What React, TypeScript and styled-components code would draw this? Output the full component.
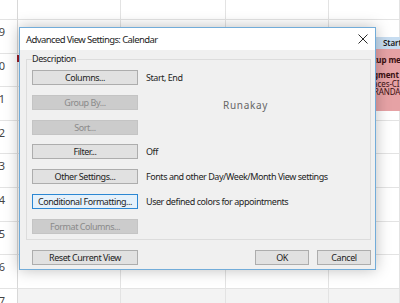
import React from "react";
import styled, { createGlobalStyle } from "styled-components";

const GlobalStyle = createGlobalStyle`
  html, body {
    margin: 0;
    padding: 0;
    overflow: hidden;
    background: #ffffff;
    font-family: "Noto Sans", "Open Sans", sans-serif;
  }
`;

const Page = styled.div`
  position: relative;
  width: 400px;
  height: 303px;
  overflow: hidden;
  background: #ffffff;
`;

const Grid = styled.div`
  display: grid;
  grid-template-columns: 18px 103px 105px 103px 1fr;
  grid-template-rows: 20px repeat(8, 33.6px) 1fr;
  width: 100%;
  height: 100%;
`;

const HourCell = styled.div`
  display: flex;
  justify-content: flex-end;
  padding: 4px 12px 0 0;
  border-bottom: 1px solid #e3e3e3;
  border-right: 1px solid #d8d8d8;
  box-sizing: border-box;
  font-size: 11px;
  color: #444;
  white-space: nowrap;
`;

const DayCell = styled.div<{ $off: boolean }>`
  border-bottom: 1px solid #e3e3e3;
  border-right: 1px solid #e3e3e3;
  box-sizing: border-box;
  background: ${(p) => (p.$off ? "#f3f3f3" : "#ffffff")};
`;

const Marker = styled.div`
  position: absolute;
  left: 17px;
  top: 55px;
  width: 3px;
  height: 7px;
  background: #9c1a24;
`;

const Appointment = styled.div`
  position: absolute;
  left: 338px;
  top: 37px;
  width: 70px;
  display: flex;
  flex-direction: column;
  font-size: 8px;
  line-height: 8.5px;
  letter-spacing: -0.1px;
  white-space: nowrap;
`;

const AllDay = styled.div`
  height: 12px;
  padding: 2px 0 0 45px;
  box-sizing: border-box;
  background: #c7ddf1;
  color: #1a1a1a;
  font-weight: 600;
  overflow: hidden;
`;

const ApptBody = styled.div`
  height: 62px;
  padding: 7px 0 0 25px;
  box-sizing: border-box;
  background: #e6a2a5;
  border-left: 1px solid #c0686c;
  color: #3b1011;
  overflow: hidden;
`;

const ApptLine = styled.div<{ $bold?: boolean; $gap?: number }>`
  font-weight: ${(p) => (p.$bold ? 700 : 400)};
  margin-bottom: ${(p) => p.$gap ?? 0}px;
`;

const Dialog = styled.div`
  position: absolute;
  left: 19px;
  top: 27px;
  width: 357px;
  height: 243px;
  box-sizing: border-box;
  display: flex;
  flex-direction: column;
  background: #f0f0f0;
  border: 1px solid #72acd9;
  box-shadow: 0 0 14px rgba(0, 0, 0, 0.26);
`;

const TitleBar = styled.div`
  height: 22px;
  flex: 0 0 auto;
  display: flex;
  align-items: center;
  justify-content: space-between;
  padding: 0 6px 0 6px;
  background: #ffffff;
  font-size: 9.5px;
  letter-spacing: -0.6px;
  color: #1e1e1e;
`;

const Close = styled.svg`
  width: 10px;
  height: 10px;
  margin-right: 1px;
`;

const Body = styled.div`
  flex: 1 1 auto;
  display: flex;
  flex-direction: column;
  padding: 9px 4px 5px 6px;
`;

const GroupBox = styled.div`
  position: relative;
  display: flex;
  flex-direction: column;
  gap: 9.8px;
  padding: 10px 0 5px 5px;
  border: 1px solid #dcdcdc;
`;

const Legend = styled.div`
  position: absolute;
  left: 5px;
  top: -7px;
  padding: 0 1px 0 0;
  background: #f0f0f0;
  font-size: 9px;
  letter-spacing: -0.4px;
  line-height: 12px;
  color: #1e1e1e;
`;

const Row = styled.div`
  display: flex;
  align-items: center;
  gap: 8px;
  height: 15px;
`;

const Button = styled.div<{ $variant?: "normal" | "disabled" | "default"; $width?: number }>`
  width: ${(p) => p.$width ?? 106}px;
  height: 15px;
  box-sizing: border-box;
  display: flex;
  align-items: center;
  justify-content: center;
  font-size: 9px;
  letter-spacing: -0.45px;
  border: 1px solid
    ${(p) => (p.$variant === "disabled" ? "#c4c4c4" : p.$variant === "default" ? "#2b87d3" : "#adadad")};
  background: ${(p) =>
    p.$variant === "disabled" ? "#cccccc" : p.$variant === "default" ? "#e5f1fb" : "#e1e1e1"};
  color: ${(p) => (p.$variant === "disabled" ? "#8a8a8a" : "#1e1e1e")};
  white-space: nowrap;
`;

const Text = styled.div`
  font-size: 9px;
  letter-spacing: -0.45px;
  color: #1e1e1e;
  white-space: nowrap;
`;

const Watermark = styled.div`
  margin: 5px 0 0 77px;
  font-size: 10px;
  letter-spacing: 0.7px;
  color: #666666;
`;

const Footer = styled.div`
  display: flex;
  align-items: center;
  gap: 8px;
  padding: 10px 0 0 6px;
`;

const Spacer = styled.div`
  flex: 1 1 auto;
`;

const hours = ["08", "09", "10", "11", "12", "13", "14", "15", "16", "17"];

const rows: { label: string; variant: "normal" | "disabled" | "default"; text?: string }[] = [
  { label: "Columns...", variant: "normal", text: "Start, End" },
  { label: "Group By...", variant: "disabled" },
  { label: "Sort...", variant: "disabled" },
  { label: "Filter...", variant: "normal", text: "Off" },
  { label: "Other Settings...", variant: "normal", text: "Fonts and other Day/Week/Month View settings" },
  { label: "Conditional Formatting...", variant: "default", text: "User defined colors for appointments" },
  { label: "Format Columns...", variant: "disabled" },
];

const App: React.FC = () => (
  <Page>
    <GlobalStyle />
    <Grid>
      {hours.map((h, i) => (
        <React.Fragment key={h}>
          <HourCell>{i === 0 ? "" : h}</HourCell>
          {[0, 1, 2, 3].map((d) => (
            <DayCell key={d} $off={h === "17"} />
          ))}
        </React.Fragment>
      ))}
    </Grid>
    <Marker />
    <Appointment>
      <AllDay>Start</AllDay>
      <ApptBody>
        <ApptLine $bold $gap={6.5}>Setup meeting</ApptLine>
        <ApptLine $bold>Segment 2</ApptLine>
        <ApptLine>Spaces-CI</ApptLine>
        <ApptLine>MIRANDA</ApptLine>
        <ApptLine>[]</ApptLine>
      </ApptBody>
    </Appointment>
    <Dialog>
      <TitleBar>
        <span>Advanced View Settings: Calendar</span>
        <Close viewBox="0 0 10 10">
          <path d="M0.5 0.5 L9.5 9.5 M9.5 0.5 L0.5 9.5" stroke="#2a2a2a" strokeWidth="1" fill="none" />
        </Close>
      </TitleBar>
      <Body>
        <GroupBox>
          <Legend>Description</Legend>
          {rows.map((r, i) => (
            <Row key={r.label}>
              <Button $variant={r.variant}>{r.label}</Button>
              {r.text && <Text>{r.text}</Text>}
              {i === 1 && <Watermark>Runakay</Watermark>}
            </Row>
          ))}
        </GroupBox>
        <Footer>
          <Button>Reset Current View</Button>
          <Spacer />
          <Button $width={54}>OK</Button>
          <Button $width={54}>Cancel</Button>
        </Footer>
      </Body>
    </Dialog>
  </Page>
);

export default App;
